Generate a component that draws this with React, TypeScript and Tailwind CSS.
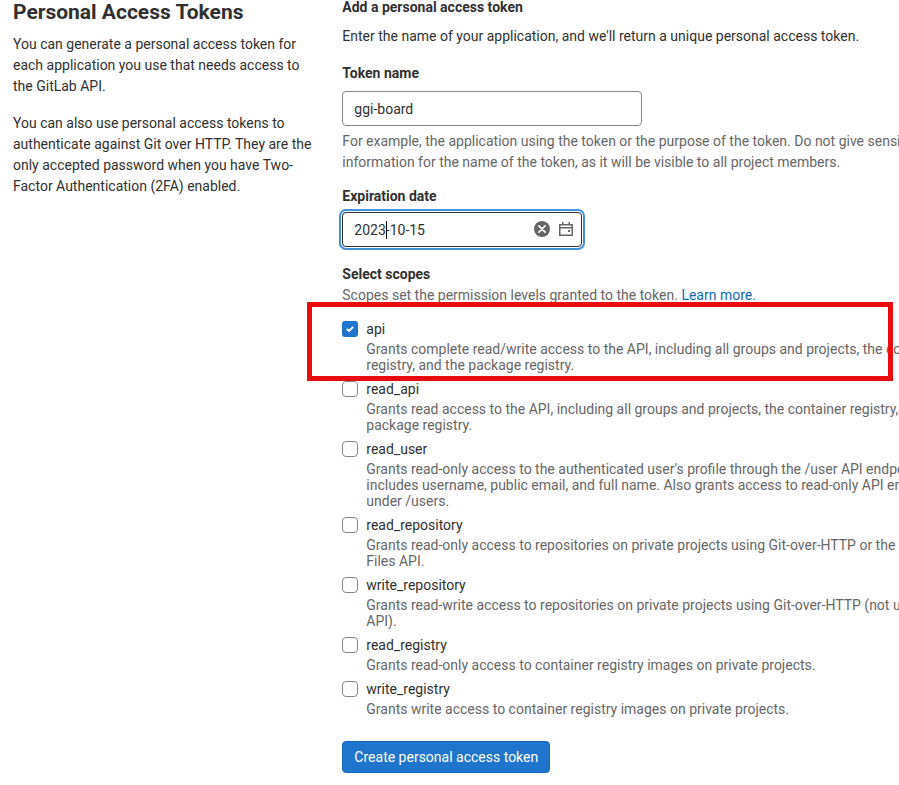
type Scope = { name: string; help: string[]; checked?: boolean };

const scopes: Scope[] = [
  {
    name: 'api',
    checked: true,
    help: [
      'Grants complete read/write access to the API, including all groups and projects, the container',
      'registry, and the package registry.',
    ],
  },
  {
    name: 'read_api',
    help: [
      'Grants read access to the API, including all groups and projects, the container registry, and the',
      'package registry.',
    ],
  },
  {
    name: 'read_user',
    help: [
      "Grants read-only access to the authenticated user's profile through the /user API endpoint, which",
      'includes username, public email, and full name. Also grants access to read-only API endpoints',
      'under /users.',
    ],
  },
  {
    name: 'read_repository',
    help: [
      'Grants read-only access to repositories on private projects using Git-over-HTTP or the Repository',
      'Files API.',
    ],
  },
  {
    name: 'write_repository',
    help: [
      'Grants read-write access to repositories on private projects using Git-over-HTTP (not using the',
      'API).',
    ],
  },
  {
    name: 'read_registry',
    help: ['Grants read-only access to container registry images on private projects.'],
  },
  {
    name: 'write_registry',
    help: ['Grants write access to container registry images on private projects.'],
  },
];

function Checkbox({ checked }: { checked?: boolean }) {
  return checked ? (
    <span className="flex size-4 shrink-0 items-center justify-center rounded-[3px] bg-[#1f75cb]">
      <svg viewBox="0 0 8 8" className="size-2" fill="none" stroke="#fff" strokeWidth="1.9">
        <path d="M0.8 3.9 3 6 7.2 1.8" />
      </svg>
    </span>
  ) : (
    <span className="size-4 shrink-0 rounded-[4px] border border-[#868686] bg-white" />
  );
}

function ScopeRow({ scope }: { scope: Scope }) {
  return (
    <li className="flex gap-2">
      <Checkbox checked={scope.checked} />
      <div className="leading-4">
        <p>{scope.name}</p>
        <div className="mt-1 text-[#666]">
          {scope.help.map((line) => (
            <p key={line}>{line}</p>
          ))}
        </div>
      </div>
    </li>
  );
}

export default function App() {
  return (
    <main className="relative flex h-[785px] w-[899px] overflow-hidden bg-white font-['Roboto',sans-serif] text-sm leading-[21px] text-[#303030]">
      <section className="w-[342.3px] shrink-0 pl-[13px]">
        <h4 className="text-[21px] leading-6 font-bold">Personal Access Tokens</h4>
        <p className="mt-[10px] w-[300px]">
          You can generate a personal access token for
          <br />
          each application you use that needs access to
          <br />
          the GitLab API.
        </p>
        <p className="mt-4 w-[310px]">
          You can also use personal access tokens to
          <br />
          authenticate against Git over HTTP. They are the
          <br />
          only accepted password when you have Two-
          <br />
          Factor Authentication (2FA) enabled.
        </p>
      </section>

      <section className="shrink-0 whitespace-nowrap">
        <h5 className="-mt-[3px] font-bold">Add a personal access token</h5>
        <p className="mt-2">
          Enter the name of your application, and we'll return a unique personal access token.
        </p>

        <h5 className="mt-4 font-bold">Token name</h5>
        <div className="mt-[7px] flex h-[35px] w-[300px] items-center rounded-[4px] border border-[#868686] px-[11px] pt-[2px]">
          ggi-board
        </div>
        <div className="mt-[5px] text-[#666]">
          <p>
            For example, the application using the token or the purpose of the token. Do not give sensitive
          </p>
          <p>information for the name of the token, as it will be visible to all project members.</p>
        </div>

        <h5 className="mt-[13px] font-bold">Expiration date</h5>
        <div className="mt-[5px] flex h-[35px] w-[240px] items-center rounded-[4px] border border-[#303030] pr-[7px] pl-[11px] shadow-[0_0_0_1px_#fff,0_0_0_3px_#428fdc]">
          <span className="pt-[2px]">2023</span>
          <span className="-mr-px h-[18px] w-px bg-black" />
          <span className="pt-[2px]">-10-15</span>
          <svg viewBox="0 0 16 16" className="mb-px ml-auto size-4">
            <circle cx="8" cy="8" r="8" fill="#666" />
            <path d="m4.9 4.9 6.2 6.2m0-6.2-6.2 6.2" stroke="#fff" strokeWidth="1.7" strokeLinecap="round" />
          </svg>
          <svg viewBox="0 0 16 16" className="mb-px ml-2 size-4" fill="none" stroke="#666" strokeWidth="1.5">
            <path d="M1.75 3.75h12.5v10.5H1.75zM1.75 6.75h12.5M4.75 1v3M11.25 1v3" />
            <path d="M10 9h2v2h-2z" fill="#666" stroke="none" />
          </svg>
        </div>

        <h5 className="mt-[17px] font-bold">Select scopes</h5>
        <p className="text-[#666]">
          Scopes set the permission levels granted to the token.{' '}
          <a className="text-[#1068bf]">Learn more.</a>
        </p>
        <ul className="mt-[15px] flex flex-col gap-2">
          {scopes.map((scope) => (
            <ScopeRow key={scope.name} scope={scope} />
          ))}
        </ul>

        <button className="mt-6 flex h-8 w-[208px] items-center justify-center rounded-[4px] border border-[#1068bf] bg-[#1f75cb] text-white">
          Create personal access token
        </button>
      </section>

      <div className="absolute top-[302px] left-[307px] h-[79px] w-[586px] border-[5px] border-[#e90c0c]" />
    </main>
  );
}
